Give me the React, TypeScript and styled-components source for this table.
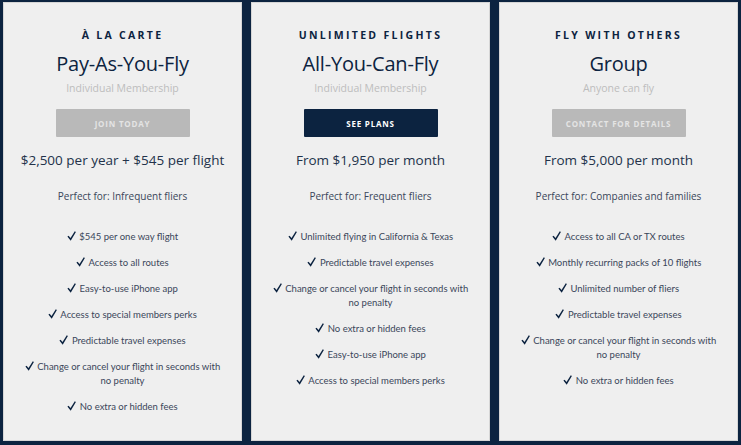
import styled, { createGlobalStyle } from "styled-components";

interface Plan {
  label: string;
  title: string;
  subtitle: string;
  cta: string;
  primary?: boolean;
  price: string;
  audience: string;
  features: string[];
}

const plans: Plan[] = [
  {
    label: "À LA CARTE",
    title: "Pay-As-You-Fly",
    subtitle: "Individual Membership",
    cta: "JOIN TODAY",
    price: "$2,500 per year + $545 per flight",
    audience: "Perfect for: Infrequent fliers",
    features: [
      "$545 per one way flight",
      "Access to all routes",
      "Easy-to-use iPhone app",
      "Access to special members perks",
      "Predictable travel expenses",
      "Change or cancel your flight in seconds with no penalty",
      "No extra or hidden fees",
    ],
  },
  {
    label: "UNLIMITED FLIGHTS",
    title: "All-You-Can-Fly",
    subtitle: "Individual Membership",
    cta: "SEE PLANS",
    primary: true,
    price: "From $1,950 per month",
    audience: "Perfect for: Frequent fliers",
    features: [
      "Unlimited flying in California & Texas",
      "Predictable travel expenses",
      "Change or cancel your flight in seconds with no penalty",
      "No extra or hidden fees",
      "Easy-to-use iPhone app",
      "Access to special members perks",
    ],
  },
  {
    label: "FLY WITH OTHERS",
    title: "Group",
    subtitle: "Anyone can fly",
    cta: "CONTACT FOR DETAILS",
    price: "From $5,000 per month",
    audience: "Perfect for: Companies and families",
    features: [
      "Access to all CA or TX routes",
      "Monthly recurring packs of 10 flights",
      "Unlimited number of fliers",
      "Predictable travel expenses",
      "Change or cancel your flight in seconds with no penalty",
      "No extra or hidden fees",
    ],
  },
];

// calligraphic tick, thin short stroke and a heavier long one
function Tick() {
  return (
    <CheckIcon viewBox="0 0 9 10" aria-hidden="true">
      <path d="M0.4 5.6 L1.6 4.7 L3.5 7.1 L7.8 0.3 L8.9 1 L3.7 9.7 Z" fill="#0c2340" />
    </CheckIcon>
  );
}

export default function App() {
  return (
    <>
      <GlobalStyle />
      <Page>
        {plans.map((plan) => (
          <Card key={plan.title}>
            <Label>{plan.label}</Label>
            <Title>{plan.title}</Title>
            <Subtitle>{plan.subtitle}</Subtitle>
            <Button $primary={plan.primary}>{plan.cta}</Button>
            <Price>{plan.price}</Price>
            <Audience>{plan.audience}</Audience>
            <Features>
              {plan.features.map((f) => (
                <Feature key={f}>
                  <Tick /> {f}
                </Feature>
              ))}
            </Features>
          </Card>
        ))}
      </Page>
    </>
  );
}

const GlobalStyle = createGlobalStyle`
  html, body {
    margin: 0;
    padding: 0;
    background: #0c2340;
  }
  body {
    font-family: "Open Sans", "Liberation Sans", sans-serif;
  }
`;

const Page = styled.div`
  width: 741px;
  height: 445px;
  box-sizing: border-box;
  padding: 2px 3px 4px 3px;
  display: grid;
  grid-template-columns: repeat(3, 1fr);
  column-gap: 9px;
  background: #0c2340;
`;

const Card = styled.div`
  background: #efefef;
  border: 1px solid #d6d6d6;
  box-sizing: border-box;
  display: flex;
  flex-direction: column;
  align-items: center;
  padding-top: 25px;
  color: #0c2340;
`;

const Label = styled.div`
  font-size: 10.5px;
  font-weight: 700;
  letter-spacing: 2.3px;
  line-height: 14px;
`;

const Title = styled.div`
  font-size: 20px;
  line-height: 28px;
  margin-top: 8px;
  letter-spacing: -0.2px;
`;

const Subtitle = styled.div`
  font-size: 10.5px;
  line-height: 14px;
  color: #bdbdbd;
  margin-top: 3px;
`;

const Button = styled.div<{ $primary?: boolean }>`
  width: 134px;
  height: 28px;
  margin-top: 14px;
  display: flex;
  align-items: center;
  justify-content: center;
  background: ${(p) => (p.$primary ? "#0c2340" : "#b9b9b9")};
  color: ${(p) => (p.$primary ? "#ffffff" : "#e4e4e4")};
  font-size: 8px;
  font-weight: 700;
  letter-spacing: 0.8px;
  border-radius: 1px;
`;

const Price = styled.div`
  font-size: 13.5px;
  line-height: 20px;
  margin-top: 13px;
  color: #22324a;
`;

const Audience = styled.div`
  font-size: 10px;
  line-height: 14px;
  margin-top: 19px;
  color: #3a465a;
`;

const Features = styled.div`
  margin-top: 27px;
  display: flex;
  flex-direction: column;
  align-items: center;
  gap: 12px;
  max-width: 200px;
`;

const Feature = styled.div`
  font-family: Lato, "Open Sans", sans-serif;
  font-size: 9.5px;
  line-height: 14px;
  text-align: center;
  color: #3a465a;
`;

const CheckIcon = styled.svg`
  width: 9px;
  height: 10px;
  vertical-align: -1px;
  margin-right: 1px;
`;
